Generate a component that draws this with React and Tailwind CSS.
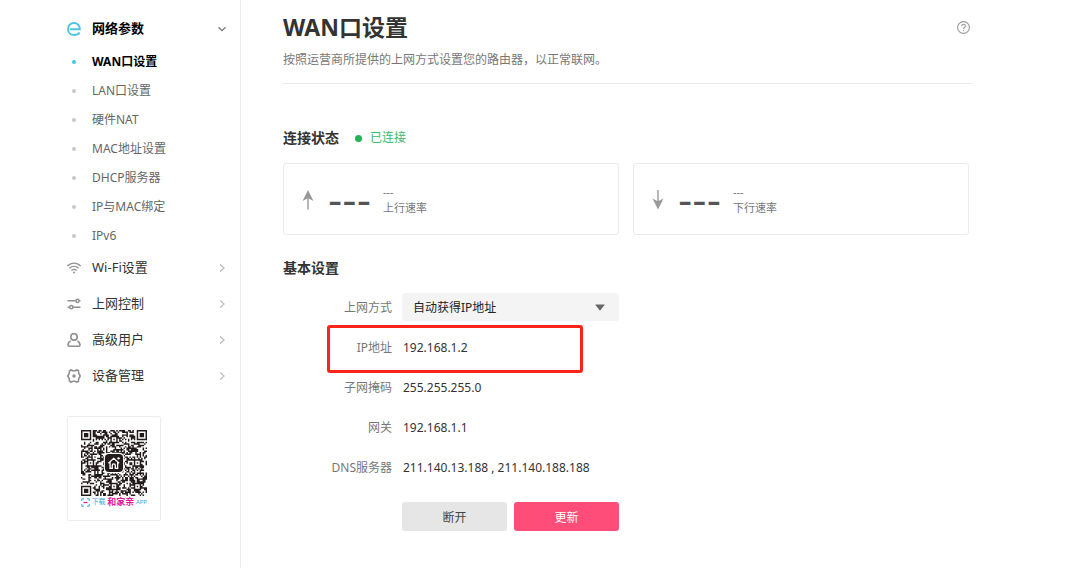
import React from "react";

const subMenu = ["WAN口设置", "LAN口设置", "硬件NAT", "MAC地址设置", "DHCP服务器", "IP与MAC绑定", "IPv6"];

const BrandIcon = () => (
  <svg className="w-[14px] h-[14px]" viewBox="0 0 14 14" fill="none" stroke="#4cc6e6" strokeWidth="1.9">
    <path d="M3 7.3H12.9C12.9 3.5 10.4 1 7 1C3.5 1 1 3.6 1 7C1 10.4 3.5 13 7 13C9.4 13 11.5 12.1 12.7 10.6"/>
  </svg>
)

const WifiIcon = () => (
  <svg className="w-[14px] h-[14px]" viewBox="0 0 14 14" fill="none" stroke="#8f8f8f" strokeWidth="1.4">
    <path d="M0.3 4.9C4.2 1.2 9.8 1.2 13.7 4.9"/>
    <path d="M2.4 7.2C5.1 4.7 8.9 4.7 11.6 7.2"/>
    <path d="M4.4 9.5C6 8.1 8 8.1 9.6 9.5"/>
    <circle cx="7" cy="11.6" r="1" fill="#8f8f8f" stroke="none"/>
  </svg>
)

const SlidersIcon = () => (
  <svg className="w-[14px] h-[14px]" viewBox="0 0 14 14" fill="none" stroke="#8f8f8f" strokeWidth="1.5">
    <path d="M0.5 3.8H8.7M12.3 3.8H13.5"/>
    <circle cx="10.5" cy="3.8" r="1.6"/>
    <path d="M0.5 10.2H2.5M6.1 10.2H13.5"/>
    <circle cx="4.3" cy="10.2" r="1.6"/>
  </svg>
)

const UserIcon = () => (
  <svg className="w-[14px] h-[14px]" viewBox="0 0 14 14" fill="none" stroke="#8f8f8f" strokeWidth="1.6">
    <circle cx="7" cy="3.9" r="3.2"/>
    <path d="M3.6 7.9C2 8.8 1 10.3 1 12.1C1 12.8 1.3 13.2 2 13.2H12C12.7 13.2 13 12.8 13 12.1C13 10.3 12 8.8 10.4 7.9"/>
  </svg>
)

const GearIcon = () => (
  <svg className="w-[14px] h-[14px]" viewBox="0 0 14 14" fill="none" stroke="#8f8f8f" strokeWidth="1.6" strokeLinejoin="round">
    <path d="M4.2 0.8Q5.5 2 7 1.7Q8.5 2 9.8 0.8L11.6 1.9Q11.4 3.8 12 4.9L13.2 7L12 9.1Q11.4 10.2 11.6 12.1L9.8 13.2Q8.5 12 7 12.3Q5.5 12 4.2 13.2L2.4 12.1Q2.6 10.2 2 9.1L0.8 7L2 4.9Q2.6 3.8 2.4 1.9Z"/>
    <circle cx="7" cy="7" r="1.7" fill="#8f8f8f" stroke="none"/>
  </svg>
)

const menu = [
  {label: "Wi-Fi设置", icon: WifiIcon},
  {label: "上网控制", icon: SlidersIcon},
  {label: "高级用户", icon: UserIcon},
  {label: "设备管理", icon: GearIcon},
];

const QR_SIZE = 45;
const finders = [[0, 0], [QR_SIZE - 7, 0], [0, QR_SIZE - 7]];
const aligns = [[22, 6], [6, 22], [38, 22], [22, 38], [38, 38]];

const isDark = (x, y) => {
  for (const [fx, fy] of finders) {
    const d = Math.max(Math.abs(x - fx - 3), Math.abs(y - fy - 3));
    if (d <= 4) return d === 3 || d <= 1;
  }
  for (const [ax, ay] of aligns) {
    const d = Math.max(Math.abs(x - ax), Math.abs(y - ay));
    if (d <= 2) return d !== 1;
  }
  if (x === 6 || y === 6) return (x + y) % 2 === 0;
  let h = Math.imul(x + 11, 374761393) ^ Math.imul(y + 7, 668265263);
  h = Math.imul(h ^ (h >>> 13), 1274126177);
  return ((h ^ (h >>> 16)) & 255) < 132;
}

let qrPath = "";
for (let y = 0; y < QR_SIZE; y++) {
  for (let x = 0; x < QR_SIZE; x++) {
    if (isDark(x, y)) qrPath += `M${x} ${y}h1v1h-1z`;
  }
}

const QrCode = () => (
  <svg className="w-full" viewBox="0 0 45 45" role="img" aria-label="APP">
    <path d={qrPath} fill="#231b1b"/>
    <rect x="15.5" y="15.5" width="14" height="14" rx="3.4" fill="#fff"/>
    <rect x="16.3" y="16.3" width="12.4" height="12.4" rx="2.8" fill="#231b1b"/>
    <path d="M18.7 22.6L22.3 19.3L26 22.6M19.8 22V26.2H21.3V24M25 22V26.2H23.4V24M21.3 24.2C21.3 22.8 23.4 22.8 23.4 24.2" fill="none" stroke="#fff" strokeWidth="0.9"/>
    <circle cx="25.6" cy="19.3" r="0.8" fill="#fff"/>
  </svg>
)

const Sidebar = () => {
  return (
    <nav className="w-[241px] shrink-0 border-r border-[#ebebeb] pt-[11px] pl-[67px] pr-[13px]">
      <button className="w-full h-9 flex items-center gap-[11px] text-[13px] font-bold text-black">
        <BrandIcon/>
        <span className="flex-1 text-left">网络参数</span>
        <svg className="w-[10px] h-[10px]" viewBox="0 0 10 10" fill="none" stroke="#777" strokeWidth="1.3">
          <path d="M1.5 3.2L5 6.7L8.5 3.2"/>
        </svg>
      </button>
      <ul>
        {subMenu.map((item, i) => (
          <li key={item}>
            <a href="#" className={i === 0
              ? "h-[29px] flex items-center gap-[11px] text-[12px] font-bold text-black"
              : "h-[29px] flex items-center gap-[11px] text-[12px] text-[#666]"}>
              <span className="w-[14px] flex justify-center">
                <span className={i === 0 ? "size-1 rounded-full bg-[#45c3e6]" : "size-1 rounded-full bg-[#c8c8c8]"}/>
              </span>
              {item}
            </a>
          </li>
        ))}
      </ul>
      {menu.map(({label, icon: Icon}) => (
        <button key={label} className="w-full h-9 flex items-center gap-[11px] text-[13px] text-[#333]">
          <Icon/>
          <span className="flex-1 text-left">{label}</span>
          <svg className="w-[10px] h-[10px]" viewBox="0 0 10 10" fill="none" stroke="#bbb" strokeWidth="1.2">
            <path d="M3.2 1.5L7 5L3.2 8.5"/>
          </svg>
        </button>
      ))}
      <div className="w-[94px] mt-[22px] pt-[13px] pb-3 px-[13px] border border-[#ededed] rounded-xs">
        <QrCode/>
        <div className="flex items-center justify-between leading-3 whitespace-nowrap">
          <svg className="w-[9px] h-[9px]" viewBox="0 0 9 9" fill="none" stroke="#35a5dc" strokeWidth="1">
            <path d="M3 0.8H0.8V3M6 0.8H8.2V3M3 8.2H0.8V6M6 8.2H8.2V6"/>
            <path d="M2.5 4.5H6.5" stroke="#e5179a" strokeWidth="1.3"/>
          </svg>
          <span className="text-[7px] text-[#35a5dc]">下载</span>
          <span className="text-[9px] font-bold text-[#e5179a]">和家亲</span>
          <span className="text-[6px] text-[#35a5dc]">APP</span>
        </div>
      </div>
    </nav>
  )
}

const RateCard = ({label, up}) => {
  return (
    <div className="flex-1 h-[72px] flex items-center border border-[#ebebeb] rounded-[3px] pt-px pl-[18px]">
      <svg className="w-3 h-5" viewBox="0 0 12 20" fill="#999">
        {up
          ? <path d="M6 0L11.5 11L6.7 8.6V19.5H5.3V8.6L0.5 11Z"/>
          : <path d="M6 19.5L11.5 8.5L6.7 10.9V0H5.3V10.9L0.5 8.5Z"/>}
      </svg>
      <span className="ml-[14px] font-['Liberation_Sans',sans-serif] text-[43px] leading-[48px] text-[#555]">---</span>
      <div className="ml-3 text-[11px] leading-4 text-[#777]">
        <div>---</div>
        <div>{label}</div>
      </div>
    </div>
  )
}

const rows = [
  {label: "IP地址", value: "192.168.1.2", marked: true},
  {label: "子网掩码", value: "255.255.255.0"},
  {label: "网关", value: "192.168.1.1"},
  {label: "DNS服务器", value: "211.140.13.188 , 211.140.188.188"},
];

const SettingsForm = () => {
  return (
    <form className="mt-[15px] text-[12px]" onSubmit={(e) => e.preventDefault()}>
      <div className="flex flex-col gap-3">
        <div className="h-7 flex items-center gap-[10px]">
          <label htmlFor="mode" className="w-[109px] pt-0.5 text-right text-[#777]">上网方式</label>
          <div className="relative">
            <select id="mode" className="block appearance-none w-[217px] h-7 pt-0.5 pl-[11px] rounded-[3px] bg-[#f4f4f4] text-[#222]">
              <option>自动获得IP地址</option>
            </select>
            <svg className="absolute right-[14px] top-[11px] w-[10px] h-[7px] pointer-events-none" viewBox="0 0 10 7" fill="#666">
              <path d="M1 0.5H9Q9.8 0.5 9.3 1.2L5.6 6Q5 6.7 4.4 6L0.7 1.2Q0.2 0.5 1 0.5Z"/>
            </svg>
          </div>
        </div>
        {rows.map((row) => (
          <div key={row.label} className="relative h-7 pt-0.5 flex items-center gap-[11px]">
            <span className="w-[109px] text-right text-[#777]">{row.label}</span>
            <span className="text-[#333]">{row.value}</span>
            {row.marked && (
              <div className="absolute left-11 -top-2 -bottom-3 w-[256px] border-3 border-[#fb2418] rounded-[3px] pointer-events-none"/>
            )}
          </div>
        ))}
      </div>
      <div className="flex gap-[7px] mt-[21px] ml-[119px]">
        <button type="button" className="w-[105px] h-[29px] pt-0.5 rounded-[3px] bg-[#e6e6e6] text-[#444]">断开</button>
        <button type="submit" className="w-[105px] h-[29px] pt-0.5 rounded-[3px] bg-[#ff4d79] text-white">更新</button>
      </div>
    </form>
  )
}

function App() {
  return (
    <div className="min-h-screen w-full flex bg-white font-['Noto_Sans','Noto_Sans_CJK_SC',sans-serif]">
      <Sidebar/>
      <main className="flex-1 pt-[11px] pl-[42px] pr-[108px]">
        <header className="pb-[13px] border-b border-[#ebebeb]">
          <div className="flex items-center justify-between pr-[2px]">
            <h1 className="text-[23px] leading-8 font-bold text-[#333]">WAN口设置</h1>
            <button aria-label="帮助">
              <svg className="w-[13px] h-[13px]" viewBox="0 0 13 13" fill="none" stroke="#999" strokeWidth="1.1">
                <circle cx="6.5" cy="6.5" r="5.9"/>
                <path d="M4.6 5.2C4.6 4 5.4 3.3 6.5 3.3C7.6 3.3 8.4 4 8.4 5C8.4 6.2 6.5 6.3 6.5 7.9"/>
                <path d="M6.5 8.9V10.1"/>
              </svg>
            </button>
          </div>
          <p className="mt-[7px] text-[12px] leading-5 text-[#777]">按照运营商所提供的上网方式设置您的路由器，以正常联网。</p>
        </header>
        <section className="mt-11 pr-[3px]">
          <div className="flex items-center">
            <h2 className="text-[14px] leading-5 font-bold text-[#333]">连接状态</h2>
            <span className="size-[7px] ml-4 mr-2 rounded-full bg-[#22b455]"/>
            <span className="text-[12px] leading-5 text-[#3cb966]">已连接</span>
          </div>
          <div className="flex gap-[14px] mt-[15px]">
            <RateCard label="上行速率" up/>
            <RateCard label="下行速率"/>
          </div>
        </section>
        <section className="mt-[23px]">
          <h2 className="text-[14px] leading-5 font-bold text-[#333]">基本设置</h2>
          <SettingsForm/>
        </section>
      </main>
    </div>
  )
}

export default App;
